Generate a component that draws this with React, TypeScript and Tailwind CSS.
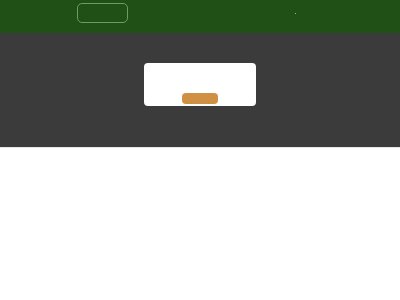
export default function App() {
  return (
    <div className="w-[400px] h-[300px] bg-white flex flex-col" style={{ fontFamily: '"Liberation Sans", sans-serif' }}>
      <div className="h-[33px] bg-[#205016] flex items-start pt-[3px] pl-[77px] relative">
        <div className="w-[51px] h-[20px] rounded-[5px] border border-[#6f9a62]" />
        <div className="absolute left-[295px] top-[13px] w-[1px] h-[1px] bg-[#8fbf80]" />
      </div>
      <div className="h-[114px] bg-[#3b3b3b] flex justify-center pt-[30px]">
        <div className="w-[112px] h-[43px] bg-white rounded-[4px] flex flex-col items-center justify-end pb-[2px]">
          <div className="w-[36px] h-[11px] rounded-[4px] bg-[#cf9044]" />
        </div>
      </div>
      <div className="flex-1 bg-white border-t border-[#e6e6e6]" />
    </div>
  );
}
